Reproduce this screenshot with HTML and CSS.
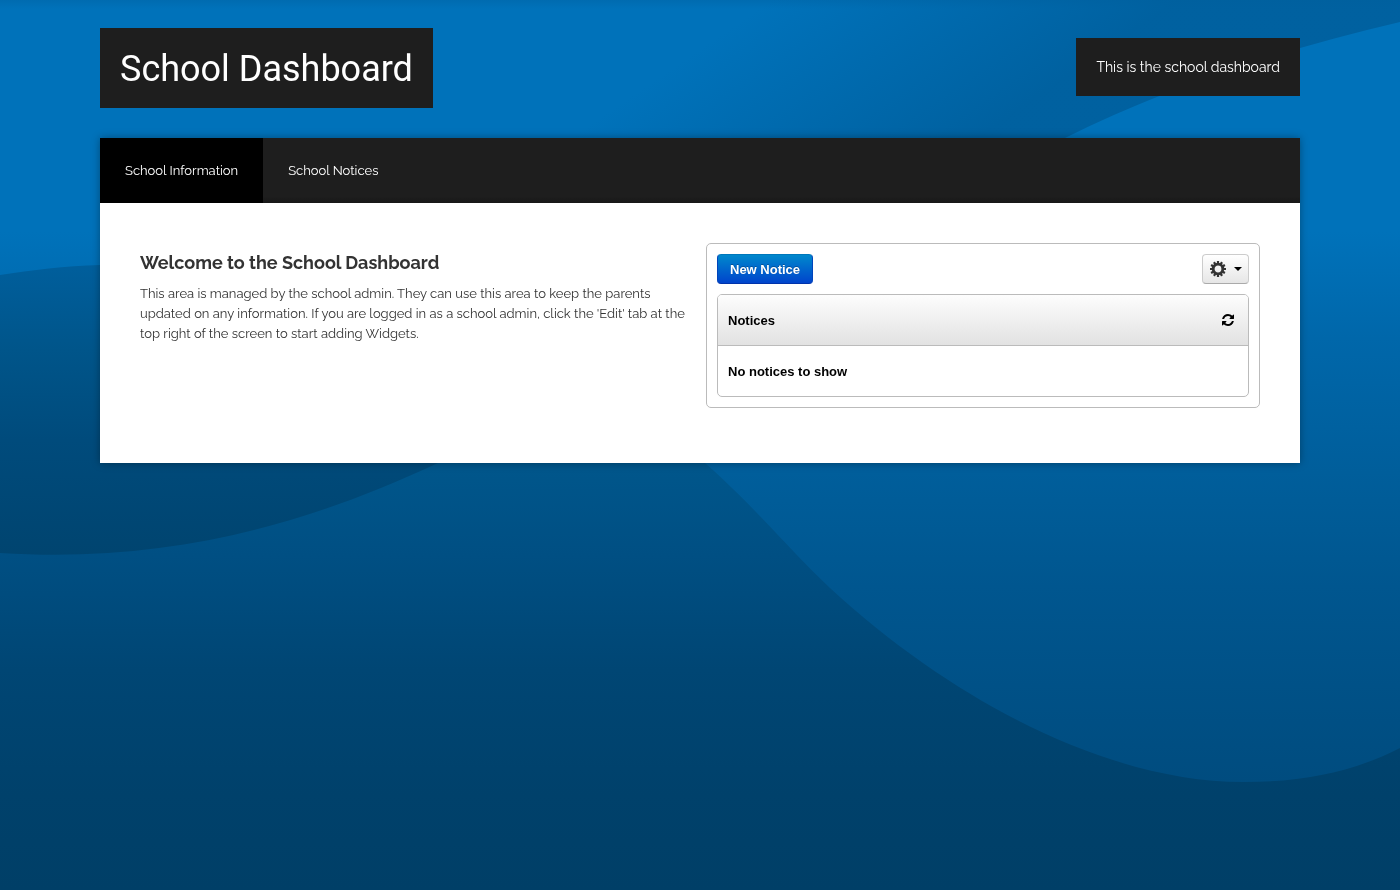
FILE: index.html
```html
<!DOCTYPE html>
<html lang="en">
<head>
<meta charset="utf-8">
<title>School Dashboard</title>
<link rel="stylesheet" href="styles.css">
</head>
<body>
<svg class="backdrop" viewBox="0 0 1400 890" preserveAspectRatio="none" aria-hidden="true">
  <defs>
    <linearGradient id="light" gradientUnits="userSpaceOnUse" x1="0" y1="0" x2="0" y2="890">
      <stop offset="0" stop-color="#006bb0"/><stop offset=".01" stop-color="#0072ba"/><stop offset=".26" stop-color="#0072ba"/><stop offset=".38" stop-color="#0067aa"/><stop offset=".53" stop-color="#005e9b"/><stop offset=".66" stop-color="#00568f"/><stop offset=".88" stop-color="#004c7f"/><stop offset="1" stop-color="#004471"/>
    </linearGradient>
    <linearGradient id="deep" gradientUnits="userSpaceOnUse" x1="0" y1="260" x2="0" y2="890">
      <stop offset="0" stop-color="#0069ab"/><stop offset=".33" stop-color="#00568b"/><stop offset=".47" stop-color="#004f83"/><stop offset=".65" stop-color="#004674"/><stop offset=".85" stop-color="#00416b"/><stop offset="1" stop-color="#003f67"/>
    </linearGradient>
    <linearGradient id="oval" gradientUnits="userSpaceOnUse" x1="0" y1="260" x2="0" y2="560">
      <stop offset="0" stop-color="#005f9d"/><stop offset=".3" stop-color="#00558a"/><stop offset=".6" stop-color="#004b7c"/><stop offset="1" stop-color="#00446f"/>
    </linearGradient>
    <linearGradient id="wedge" gradientUnits="userSpaceOnUse" x1="830" y1="-40" x2="960" y2="150">
      <stop offset="0" stop-color="#005f9d" stop-opacity="0"/><stop offset="1" stop-color="#005f9d" stop-opacity=".9"/>
    </linearGradient>
  </defs>
  <path fill="url(#light)" d="M0 0H1400V890H0Z"/>
  <path fill="url(#wedge)" d="M500 0H1400V22C1280 50 1165 88 1065 138L900 240H500Z"/>
  <path fill="url(#deep)" d="M0 400L400 300C540 340 620 390 705 463C755 507 785 545 830 588C965 712 1120 783 1245 782C1305 782 1355 771 1400 748V890H0Z"/>
  <path fill="url(#oval)" d="M0 275C32 270 65 266 100 265C300 258 450 330 520 420L438 463C310 523 170 564 0 553Z"/>
</svg>
<div class="page">
  <header class="masthead">
    <h1 class="site-title">School Dashboard</h1>
    <p class="tagline">This is the school dashboard</p>
  </header>
  <div class="panel">
    <nav class="tabs">
      <a class="tab tab-active" href="#information">School Information</a>
      <a class="tab" href="#notices">School Notices</a>
    </nav>
    <main class="content" id="information">
      <section class="intro">
        <h2 class="intro-title">Welcome to the School Dashboard</h2>
        <p class="intro-text">This area is managed by the school admin. They can use this area to keep the parents updated on any information. If you are logged in as a school admin, click the 'Edit' tab at the top right of the screen to start adding Widgets.</p>
      </section>
      <section class="widget" id="notices">
        <div class="toolbar">
          <button class="btn btn-primary" type="button">New Notice</button>
          <button class="btn btn-menu" type="button" aria-label="Settings">
            <svg class="gear" viewBox="0 0 16 16" aria-hidden="true"><circle cx="8" cy="8" r="4.8" fill="none" stroke="#333" stroke-width="2.8"/><path stroke="#333" stroke-width="2.200" d="M8 0V3M8 13V16M0 8H3M13 8H16M4 1.100L5.500 3.700M10.500 12.300L12 14.900M12 1.100L10.500 3.700M5.500 12.300L4 14.900M1.100 4L3.700 5.500M12.300 10.500L14.900 12M14.900 4L12.300 5.500M3.700 10.500L1.100 12"/></svg>
            <svg class="caret" viewBox="0 0 8 4" aria-hidden="true"><path d="M0 0H8L4 4Z"/></svg>
          </button>
        </div>
        <div class="notices">
          <div class="notices-head">
            <h3 class="notices-title">Notices</h3>
            <button class="refresh" type="button" aria-label="Refresh">
              <svg class="refresh-icon" viewBox="128 128 1536 1536" aria-hidden="true"><path d="M1639 1056q0 5-1 7-64 268-268 434.500t-478 166.500q-146 0-282.500-55t-243.500-157l-129 129q-19 19-45 19t-45-19-19-45v-448q0-26 19-45t45-19h448q26 0 45 19t19 45-19 45l-137 137q71 66 161 102t187 36q134 0 250-65t186-179q11-17 53-117 8-23 30-23h192q13 0 22.500 9.500t9.500 22.500zm25-800v448q0 26-19 45t-45 19h-448q-26 0-45-19t-19-45 19-45l138-138q-148-137-349-137-134 0-250 65t-186 179q-11 17-53 117-8 23-30 23h-199q-13 0-22.500-9.500t-9.500-22.500v-7q65-268 270-434.500t480-166.500q146 0 284 55.500t245 156.500l130-129q19-19 45-19t45 19 19 45z"/></svg>
            </button>
          </div>
          <p class="notices-empty">No notices to show</p>
        </div>
      </section>
    </main>
  </div>
</div>
</body>
</html>
```
FILE: styles.css
```css
* { box-sizing: border-box; }

body {
  margin: 0;
  min-height: 100vh;
  background: #003e65;
  color: #333;
  font: 13px/20px Raleway, Lato, sans-serif;
}

h1, h2, h3, p { margin: 0; }

.backdrop {
  position: fixed;
  inset: 0;
  z-index: -1;
  width: 100%;
  height: 100%;
}

.page {
  max-width: 1240px;
  margin: 0 auto;
  padding: 28px 20px;
}

.masthead {
  display: flex;
  align-items: flex-start;
  justify-content: space-between;
  margin-bottom: 30px;
}

.site-title {
  padding: 21px 20px 19px;
  background: #1e1e1e;
  color: #fff;
  font: 400 36px/40px Roboto, sans-serif;
}

.tagline {
  margin-top: 10px;
  padding: 19px 20px;
  background: #1e1e1e;
  color: #fff;
  font-size: 14px;
}

.panel {
  background: #fff;
  box-shadow: 0 0 8px rgba(0, 0, 0, .35);
}

.tabs {
  display: flex;
  background: linear-gradient(#1e1e1e 90%, #171717);
}

.tab {
  padding: 23px 25px 22px;
  color: #fff;
  text-decoration: none;
}

.tab-active { background: #000; }

.content {
  display: grid;
  grid-template-columns: 1fr 1fr;
  gap: 12px;
  padding: 40px 40px 55px;
}

.intro { padding-top: 10px; }

.intro-title {
  margin-bottom: 11px;
  font-size: 18px;
  line-height: 20px;
}

.widget {
  padding: 10px;
  border: 1px solid #bbb;
  border-radius: 5px;
  color: #000;
  font-family: "Liberation Sans", sans-serif;
}

.toolbar {
  display: flex;
  justify-content: space-between;
  margin-bottom: 10px;
}

.btn {
  display: flex;
  align-items: center;
  height: 30px;
  border: 1px solid #ccc;
  border-radius: 4px;
  font: bold 13px/20px "Liberation Sans", sans-serif;
}

.btn-primary {
  padding: 2px 12px 0;
  border-color: #07b #04b #03a;
  background: linear-gradient(#08c, #04c);
  color: #fff;
  text-shadow: 0 -1px 0 rgba(0, 0, 0, .25);
}

.btn-menu {
  gap: 8px;
  padding: 0 6px 1px 7px;
  border-bottom-color: #aaa;
  background: linear-gradient(#fff, #e6e6e6);
}

.gear { width: 16px; height: 16px; }

.caret { width: 8px; height: 4px; }

.notices {
  border: 1px solid #bbb;
  border-radius: 5px;
}

.notices-head {
  display: flex;
  align-items: center;
  justify-content: space-between;
  padding: 16px 14px 14px 10px;
  border-bottom: 1px solid #bbb;
  border-radius: 4px 4px 0 0;
  background: linear-gradient(#fdfdfd, #e2e2e2);
}

.notices-title {
  font-size: 13px;
  line-height: 20px;
}

.refresh {
  display: flex;
  padding: 0 0 2px;
  border: 0;
  background: none;
}

.refresh-icon { width: 12px; height: 12px; }

.notices-empty {
  padding: 16px 10px 14px;
  font-weight: bold;
}
```
